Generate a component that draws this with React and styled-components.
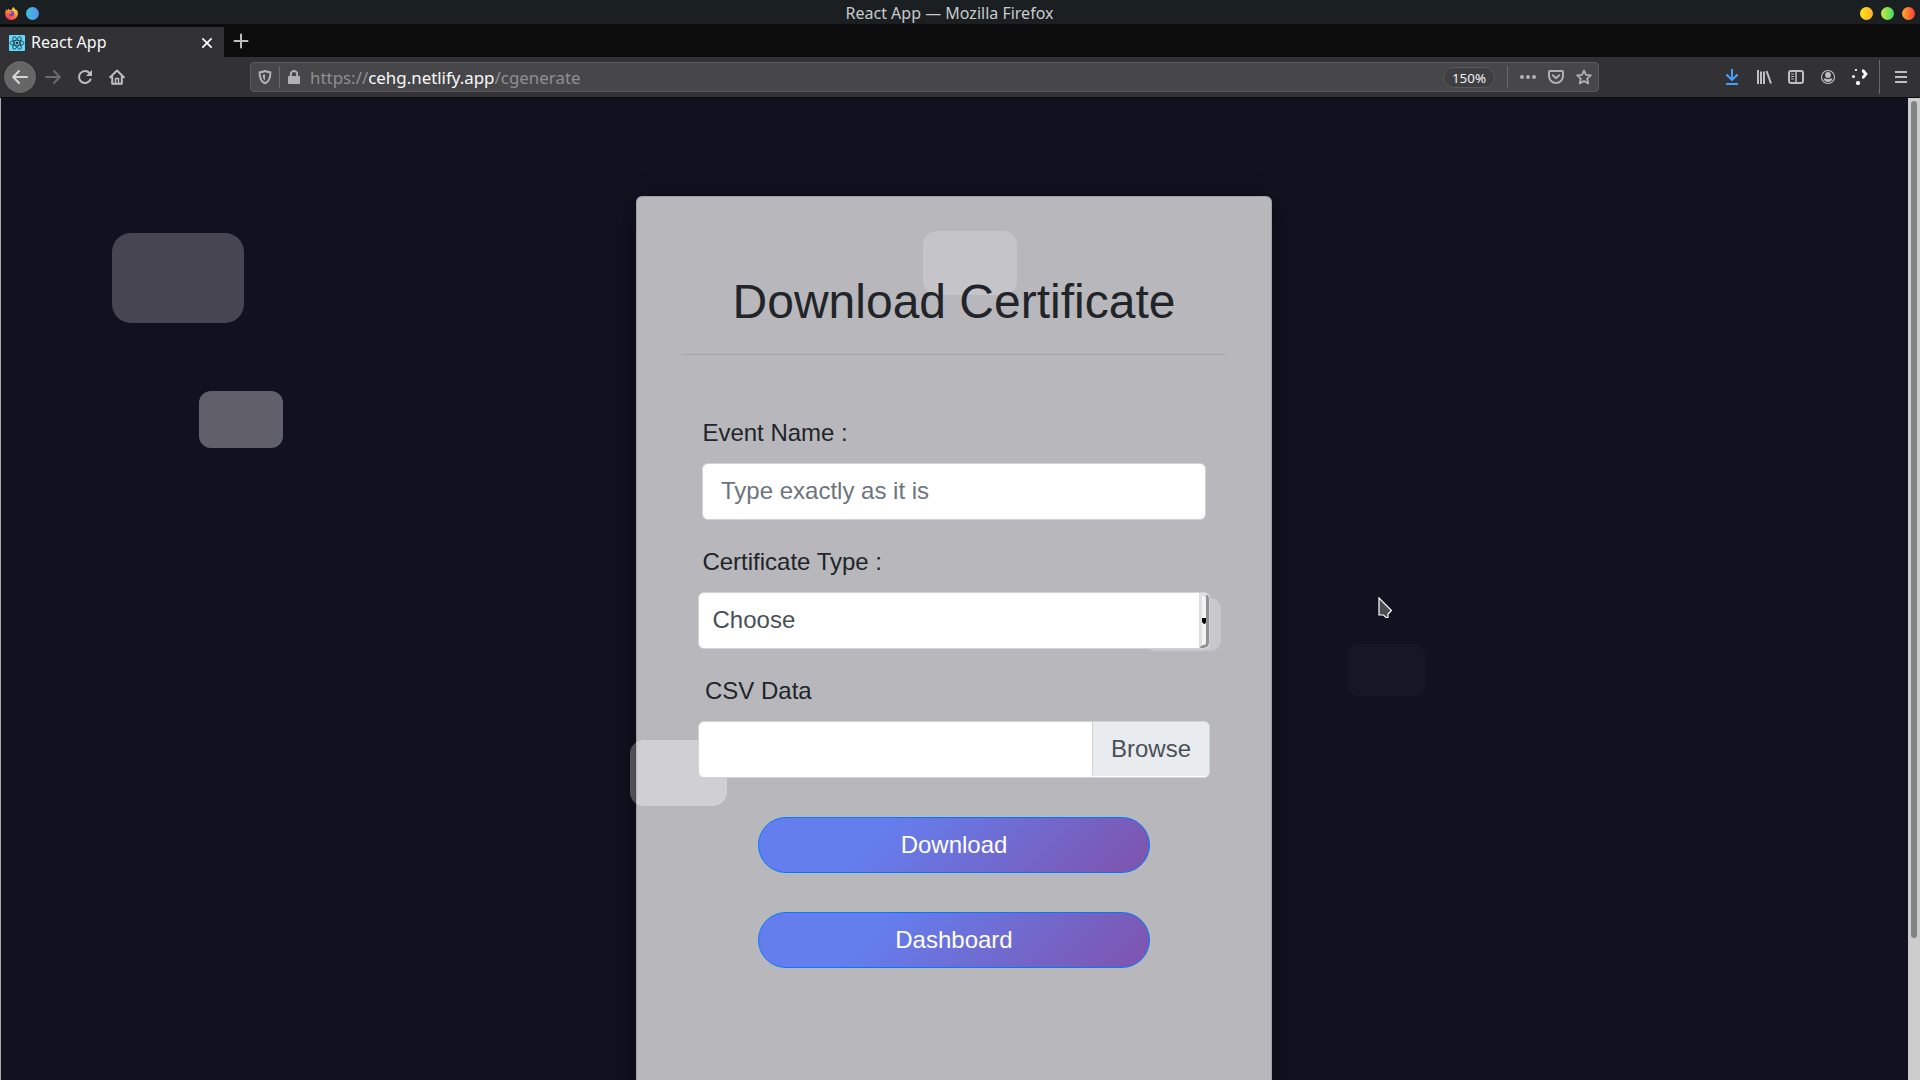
import React from "react";
import styled, { createGlobalStyle } from "styled-components";

const Global = createGlobalStyle`
  *, *::before, *::after { box-sizing: border-box; }
  html, body { margin: 0; padding: 0; background: #131120; }
  body { overflow: hidden; }
`;

const Window = styled.div`
  width: 1920px;
  height: 1080px;
  display: flex;
  flex-direction: column;
  overflow: hidden;
  font-family: "Noto Sans", sans-serif;
`;

const TitleBar = styled.header`
  height: 24px;
  flex: none;
  display: grid;
  grid-template-columns: auto 1fr auto;
  align-items: center;
  padding: 1px 5px 0;
  background: linear-gradient(#1a1f21, #1b1f22);
  color: #c6cbce;
  font-size: 16px;
  line-height: 23px;
`;

const WindowTitle = styled.span`
  padding-top: 1px;
  text-align: center;
`;

const Dots = styled.div`
  display: flex;
  gap: 8px;
`;

const Dot = styled.span`
  width: 13px;
  height: 13px;
  border-radius: 50%;
  background: linear-gradient(90deg, ${(p) => p.$from}, ${(p) => p.$to});
`;

const TabStrip = styled.div`
  height: 33px;
  flex: none;
  display: flex;
  background: #0c0c0d;
`;

const Tab = styled.div`
  width: 224px;
  height: 33px;
  display: flex;
  align-items: center;
  padding: 1px 11px 0 9px;
  border-top: 3px solid #0a84ff;
  border-image: linear-gradient(#0c0c0d 33%, #0a84ff 33%) 3 0 0 0;
  background: #323234;
  color: #f9f9fa;
`;

const TabTitle = styled.span`
  flex: 1;
  margin: 0 0 2px 6px;
  font-size: 16px;
  line-height: 22px;
`;

const NewTab = styled.div`
  width: 33px;
  display: grid;
  place-items: center;
  color: #bdbdbe;
`;

const NavBar = styled.nav`
  height: 41px;
  flex: none;
  display: flex;
  align-items: center;
  background: #323234;
  border-bottom: 1px solid #0c0c0d;
  padding: 0 11px 0 4px;
  color: #bfbfc0;
`;

const BackButton = styled.div`
  width: 32px;
  height: 32px;
  border-radius: 50%;
  background: #666667;
  box-shadow: 0 0 0 1px #2a2a2b;
  display: grid;
  place-items: center;
  color: #d6d6d6;
`;

const NavIcons = styled.div`
  display: flex;
  align-items: center;
  gap: 16px;
  margin-left: 9px;
`;

const UrlBar = styled.div`
  width: 1349px;
  height: 30px;
  margin-left: 125px;
  display: flex;
  align-items: center;
  padding: 0 6px 0 6px;
  background: #474749;
  border: 1px solid #5b5b5d;
  border-radius: 4px;
  color: #b1b1b3;
`;

const Divider = styled.span`
  width: 1px;
  height: ${(p) => p.$h}px;
  margin: 0 ${(p) => p.$r}px 0 ${(p) => p.$l}px;
  background: #6a6a6c;
`;

const Url = styled.div`
  flex: 1;
  margin-left: 8px;
  padding-top: 1px;
  font-size: 16.9px;
  line-height: 26px;
  color: #8f8f91;
`;

const Host = styled.span`
  color: #f9f9fa;
`;

const Zoom = styled.div`
  width: 52px;
  height: 21px;
  border-radius: 11px;
  border: 1px solid #59595b;
  background: #3f3f41;
  color: #f0f0f1;
  font-size: 13.4px;
  line-height: 20px;
  text-align: center;
`;

const UrlActions = styled.div`
  display: flex;
  gap: 12px;
`;

const Tools = styled.div`
  flex: 1;
  display: flex;
  justify-content: flex-end;
  align-items: center;
`;

const ToolIcons = styled.div`
  display: flex;
  gap: 16px;
`;

const Viewport = styled.div`
  flex: 1;
  min-height: 0;
  display: flex;
`;

const Page = styled.main`
  flex: 1;
  position: relative;
  display: flex;
  justify-content: center;
  padding: 98px 1px 0 0;
  overflow: hidden;
  background: #121120;
  border-left: 1px solid #a9a9ae;
  font-family: "Liberation Sans", Arial, sans-serif;
`;

const Square = styled.span`
  position: absolute;
  left: ${(p) => p.$x}px;
  top: ${(p) => p.$y}px;
  width: ${(p) => p.$w}px;
  height: ${(p) => p.$h}px;
  border-radius: ${(p) => p.$r}px;
  background: rgba(255, 255, 255, ${(p) => p.$a});
`;

const Card = styled.section`
  position: relative;
  width: 636px;
  height: 960px;
  padding: 76px 45px 0;
  background: rgba(255, 255, 255, 0.7);
  border: 1px solid rgba(0, 0, 0, 0.125);
  border-radius: 6px;
  box-shadow: 0 6px 30px rgba(0, 0, 0, 0.42);
  color: #212529;
`;

const Heading = styled.h1`
  margin: 0 0 23px;
  font-size: 48px;
  font-weight: 400;
  line-height: 58px;
  text-align: center;
`;

const Rule = styled.hr`
  margin: 0;
  border: 0;
  border-top: 1px solid rgba(0, 0, 0, 0.1);
`;

const Form = styled.form`
  display: flex;
  flex-direction: column;
  padding: 60px 16px 0;
  font-size: 24px;
  line-height: 36px;
`;

const Label = styled.label`
  margin-bottom: 12px;
  padding-left: ${(p) => p.$indent}px;
`;

const TextInput = styled.input`
  height: 57px;
  margin: 0 4px 24px;
  padding: 0 18px 2px;
  border: 1px solid #ced4da;
  border-radius: 6px;
  background: #fff;
  font: inherit;
  &::placeholder { color: #6c757d; opacity: 1; }
`;

const Picker = styled.div`
  height: 57px;
  margin-bottom: ${(p) => p.$mb}px;
  display: flex;
  align-items: stretch;
  overflow: hidden;
  border: 1px solid #ced4da;
  border-radius: 6px;
  background: #fff;
  color: #495057;
  line-height: 53px;
`;

const Value = styled.span`
  flex: 1;
  padding-left: 13.5px;
`;

const DropButton = styled.span`
  width: 10px;
  display: grid;
  place-items: center;
  background: #f4f4f4;
  border: 3px solid;
  border-color: #dfdfdf #929292 #929292 #dfdfdf;
  border-radius: 0 5px 5px 0;
`;

const Browse = styled.span`
  width: 117px;
  text-align: center;
  background: #e9ecef;
  border-left: 1px solid #ced4da;
  border-bottom: 1px solid #fff;
`;

const Button = styled.button`
  width: 392px;
  height: 56px;
  align-self: center;
  margin-bottom: 39px;
  border: 1px solid #007bff;
  border-radius: 28px;
  background: linear-gradient(135deg, #647eee 0%, #647eee 30%, #7f53ac 100%);
  color: #fff;
  font: inherit;
  line-height: 54px;
  padding: 0;
`;

const Scrollbar = styled.div`
  width: 12px;
  padding: 3px 3px 0;
  background: #cdcdcd;
`;

const Thumb = styled.div`
  width: 6px;
  height: 837px;
  border-radius: 3px;
  background: #7f8484;
`;

const Pointer = styled.svg`
  position: absolute;
  left: 1377px;
  top: 499px;
`;

const Icon = ({ size = 16, children, ...rest }) => (
  <svg width={size} height={size} viewBox="0 0 16 16" fill="none" stroke="currentColor" strokeWidth="2" strokeLinecap="round" strokeLinejoin="round" {...rest}>
    {children}
  </svg>
);

const FirefoxIcon = () => (
  <svg width="13" height="13" viewBox="0 0 13 13">
    <defs>
      <linearGradient id="fx" x1="0.8" y1="0" x2="0.2" y2="1">
        <stop offset="0" stopColor="#fff04a" />
        <stop offset="0.45" stopColor="#ff9420" />
        <stop offset="1" stopColor="#f5236a" />
      </linearGradient>
    </defs>
    <path d="M1.3 2.2 2.6 3.4 3.4 1.6 4.6 3.2C5.6 2.6 6.4 2.8 6.9 2.9 7 1.6 7.6.6 8.6 0c.3 1.4 1.8 2 2.6 3.2l.6-.3c1.4 2.2 1.7 5-.1 7.4C8.9 14 3.6 13.8 1.3 10.4-.4 7.8-.1 4.6 1.3 2.2Z" fill="url(#fx)" />
    <circle cx="6.5" cy="6.7" r="2.6" fill="#7a3fd0" />
    <path d="M3 5.2c1.3-.7 2.6-.4 3.9.3L5.2 7Z" fill="#ff9a2a" />
  </svg>
);

const ReactFavicon = () => (
  <svg width="16" height="16" viewBox="0 0 16 16">
    <rect width="16" height="16" rx="1" fill="#61dafb" />
    <g fill="none" stroke="#20323a" strokeWidth="0.8">
      <ellipse cx="8" cy="8" rx="7" ry="2.7" />
      <ellipse cx="8" cy="8" rx="7" ry="2.7" transform="rotate(60 8 8)" />
      <ellipse cx="8" cy="8" rx="7" ry="2.7" transform="rotate(120 8 8)" />
    </g>
    <circle cx="8" cy="8" r="1.3" fill="#20323a" />
  </svg>
);

const squares = [
  { x: 111, y: 135, w: 132, h: 90, r: 19, a: 0.22 },
  { x: 198, y: 293, w: 84, h: 57, r: 12, a: 0.335 },
  { x: 922, y: 133, w: 94, h: 64, r: 14, a: 0.18 },
  { x: 629, y: 642, w: 97, h: 66, r: 14, a: 0.335 },
  { x: 1142, y: 500, w: 78, h: 53, r: 11, a: 0.22 },
  { x: 1347, y: 546, w: 77, h: 52, r: 11, a: 0.022 },
];

export default function App() {
  return (
    <Window>
      <Global />
      <TitleBar>
        <Dots>
          <FirefoxIcon />
          <Dot $from="#36c5d8" $to="#5b8def" />
        </Dots>
        <WindowTitle>React App — Mozilla Firefox</WindowTitle>
        <Dots>
          <Dot $from="#fbe90c" $to="#ffad33" />
          <Dot $from="#c9e83a" $to="#45d96b" />
          <Dot $from="#ffae2b" $to="#ff3a3a" />
        </Dots>
      </TitleBar>

      <TabStrip>
        <Tab>
          <ReactFavicon />
          <TabTitle>React App</TabTitle>
          <Icon size={12}><path d="M2.5 2.5 13.5 13.5M13.5 2.5 2.5 13.5" strokeWidth="2.4" /></Icon>
        </Tab>
        <NewTab>
          <Icon><path d="M8 1.5V14.5M1.5 8H14.5" /></Icon>
        </NewTab>
      </TabStrip>

      <NavBar>
        <BackButton>
          <Icon><path d="M15 8H1.5M7 2 1.2 8 7 14" /></Icon>
        </BackButton>
        <NavIcons>
          <Icon color="#6b6b6d"><path d="M1 8H14.5M9 2 14.8 8 9 14" /></Icon>
          <Icon><path d="M13.5 10.5A6 6 0 1 1 12.5 4" /><path d="M15 1V7H9Z" fill="currentColor" stroke="none" /></Icon>
          <Icon><path d="M1.2 8.3 8 1.5 14.8 8.3M3.2 8V14.8H12.8V8" /><path d="M6.5 14V9.500H9.500V14" strokeWidth="1.5" /></Icon>
        </NavIcons>
        <UrlBar>
          <Icon>
            <path d="M8 2C6 3 4 3.2 2.6 3.2 2.6 8.5 3.6 12.6 8 14.2 12.4 12.6 13.4 8.5 13.4 3.2 12 3.2 10 3 8 2Z" />
            <path d="M8 5.2C7.2 5.6 6.4 5.8 5.6 5.8 5.7 8.4 6.4 10.4 8 11.4Z" fill="currentColor" stroke="none" />
          </Icon>
          <Divider $h={22} $l={6} $r={6} />
          <Icon>
            <path d="M4.8 8V5.2a3.2 3.2 0 0 1 6.4 0V8" />
            <rect x="2" y="7" width="12" height="8" rx="1" fill="currentColor" stroke="none" />
          </Icon>
          <Url>https://<Host>cehg.netlify.app</Host>/cgenerate</Url>
          <Zoom>150%</Zoom>
          <Divider $h={22} $l={12} $r={12} />
          <UrlActions>
            <Icon fill="currentColor" stroke="none"><circle cx="2" cy="8" r="2" /><circle cx="8" cy="8" r="2" /><circle cx="14" cy="8" r="2" /></Icon>
            <Icon><path d="M2 2H14Q15 2 15 3V7A7 7 0 0 1 1 7V3Q1 2 2 2Z" /><path d="M4.8 6.2 8 9.2 11.2 6.2" /></Icon>
            <Icon><path d="M8 1.5 10 5.9 14.8 6.4 11.2 9.6 12.3 14.4 8 12 3.7 14.4 4.8 9.6 1.2 6.4 6 5.9Z" strokeWidth="1.8" /></Icon>
          </UrlActions>
        </UrlBar>
        <Tools>
          <ToolIcons>
            <Icon color="#45a1ff"><path d="M8 .8V10.5M3 6 8 11 13 6M2.8 15H13.2" /></Icon>
            <Icon strokeLinecap="butt"><path d="M2 1V15M5 2.5V15M8 2.5V15" /><path d="M10.6 2.2 15 14.5" /></Icon>
            <Icon><rect x="1" y="2" width="14" height="12" rx="2" /><path d="M8 2V14" strokeWidth="1.5" /><path d="M3.5 5H5.5M3.5 7.5H5.5M3.5 10H5.5" strokeWidth="1" /></Icon>
            <Icon><circle cx="8" cy="8" r="6.5" strokeWidth="1.1" /><circle cx="8" cy="6" r="2.9" fill="currentColor" stroke="none" /><path d="M3.7 9.8C5 9.2 6 10.2 8 10.2 10 10.2 11 9.2 12.3 9.8 11.8 12 10 13.1 8 13.1 6 13.1 4.2 12 3.7 9.8Z" fill="currentColor" stroke="none" /></Icon>
            <Icon fill="#fff" stroke="none"><path d="M10 .5 12 .5 15.8 5 12 9.5 10 9.5V7.500L12 5 10 3Z" /><circle cx="4" cy="1" r="1.1" /><circle cx="1.5" cy="7.5" r="1.5" /><circle cx="6" cy="14" r="2.1" /></Icon>
          </ToolIcons>
          <Divider $h={34} $l={11} $r={13} />
          <Icon strokeLinecap="butt"><path d="M2 3H14M2 8H14M2 13H14" /></Icon>
        </Tools>
      </NavBar>

      <Viewport>
        <Page>
          {squares.map((s, i) => (
            <Square key={i} $x={s.x} $y={s.y} $w={s.w} $h={s.h} $r={s.r} $a={s.a} />
          ))}
          <Card>
            <Heading>Download Certificate</Heading>
            <Rule />
            <Form>
              <Label $indent={4.4}>Event Name :</Label>
              <TextInput placeholder="Type exactly as it is" />
              <Label $indent={4.4}>Certificate Type :</Label>
              <Picker $mb={24}>
                <Value>Choose</Value>
                <DropButton>
                  <svg width="4" height="6" viewBox="0 0 4 6"><path d="M0 0H4V4L3 6H2L0 4Z" fill="#000" /></svg>
                </DropButton>
              </Picker>
              <Label $indent={7}>CSV Data</Label>
              <Picker $mb={39}>
                <Value />
                <Browse>Browse</Browse>
              </Picker>
              <Button type="button">Download</Button>
              <Button type="button">Dashboard</Button>
            </Form>
          </Card>
          <Pointer width="15" height="22" viewBox="0 0 15 22">
            <path d="M1 1V18H5.5L8 20.5H10V17L13.5 13.5Z" fill="#4d4d4d" stroke="#fff" strokeWidth="1.2" />
          </Pointer>
        </Page>
        <Scrollbar>
          <Thumb />
        </Scrollbar>
      </Viewport>
    </Window>
  );
}
